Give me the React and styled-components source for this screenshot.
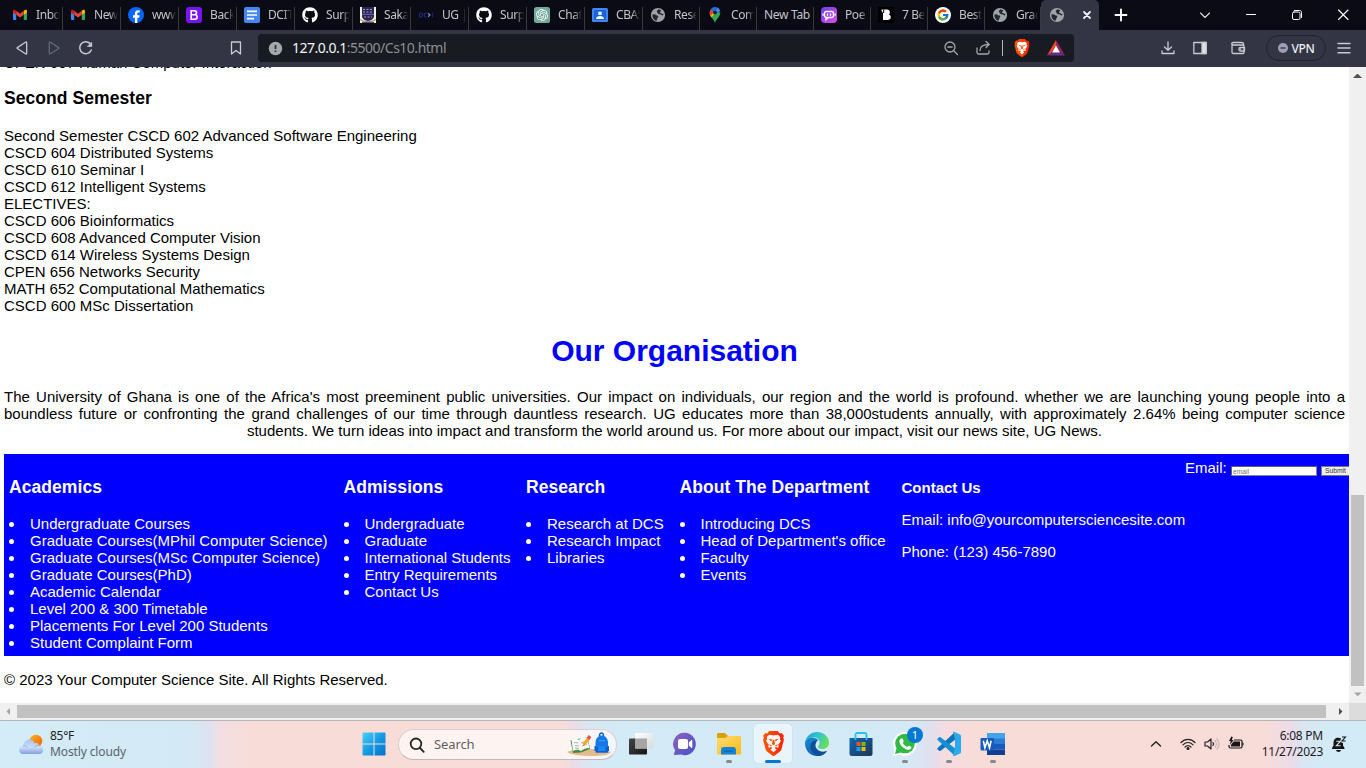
import React from "react";
import styled, { createGlobalStyle, css } from "styled-components";
import { FaGithub } from "react-icons/fa";
import { FcGoogle } from "react-icons/fc";
import { SiOpenai } from "react-icons/si";

const GlobalStyle = createGlobalStyle`
  *, *::before, *::after { box-sizing: border-box; }
  body { margin: 0; overflow: hidden; background: #fff; }
  svg { display: block; flex: none; }
`;

const uiFont = `"Noto Sans", "Open Sans", sans-serif`;

const Screen = styled.div`
  width: 1366px;
  height: 768px;
  display: flex;
  flex-direction: column;
  overflow: hidden;
  font-family: ${uiFont};
`;

/* ---------- tab strip ---------- */
const TabStrip = styled.div`
  height: 30px;
  flex: none;
  display: flex;
  padding-left: 5px;
  background: #0b0b15;
  color: #c3c4cb;
`;

const Tab = styled.div`
  width: ${(p) => p.$width || 58}px;
  height: 30px;
  flex: none;
  display: flex;
  align-items: center;
  padding-left: 7px;
  background: linear-gradient(#38393f, #38393f) right 7px / 1px 100% no-repeat;
`;

const Favicon = styled.div`
  width: 16px;
  height: 16px;
  margin-right: 8px;
  flex: none;
`;

const TabTitle = styled.div`
  flex: 1;
  min-width: 0;
  margin-right: ${(p) => (p.$bare ? 2 : 3)}px;
  overflow: hidden;
  white-space: nowrap;
  font-size: 12px;
  line-height: 18px;
  letter-spacing: ${(p) => (p.$bare ? -0.3 : -0.42)}px;
  ${(p) =>
    !p.$bare &&
    css`
      mask-image: linear-gradient(to right, #000 65%, transparent 100%);
    `}
`;

const ActiveTab = styled.div`
  width: 58px;
  flex: none;
  display: flex;
  align-items: center;
  padding-left: 8px;
  gap: 17px;
  border-radius: 5px 5px 0 0;
  background: #333544;
`;

const Slot = styled.div`
  width: ${(p) => p.$width}px;
  flex: none;
  display: flex;
  align-items: center;
  justify-content: center;
`;

const Spacer = styled.div`
  flex: 1;
`;

/* ---------- toolbar ---------- */
const Toolbar = styled.div`
  height: 37px;
  flex: none;
  display: flex;
  align-items: stretch;
  padding: 0 6px 1px;
  background: #333544;
`;

const AddressBar = styled.div`
  width: 816px;
  height: 28px;
  margin: 4px 78px 0 6px;
  flex: none;
  display: flex;
  align-items: center;
  padding-left: 10px;
  border-radius: 4px;
  background: #181b22;
`;

const Url = styled.div`
  margin-left: 9px;
  font-size: 14px;
  line-height: 20px;
  letter-spacing: -0.5px;
  white-space: nowrap;
  color: #8d9096;
  b { font-weight: 400; color: #f4f4f6; }
`;

const Divider = styled.div`
  width: 1px;
  height: 16px;
  margin: 0 3px;
  background: #b4b5ba;
`;

const VpnPill = styled.div`
  width: 60px;
  height: 26px;
  margin: 5px 0 0 6px;
  flex: none;
  display: flex;
  align-items: center;
  justify-content: center;
  gap: 4px;
  border: 1px solid #20222e;
  border-radius: 13px;
  color: #eeeef2;
  font-size: 12px;
  font-weight: 500;
  letter-spacing: -0.4px;
`;

/* ---------- web page ---------- */
const Viewport = styled.div`
  height: 636px;
  flex: none;
  display: flex;
`;

const Page = styled.main`
  width: 1349px;
  height: 636px;
  padding: 0 4px;
  overflow: hidden;
  background: #fff;
  color: #000;
  font: 15px/17px "Liberation Sans", Arial, sans-serif;
`;

const ClippedLine = styled.div`
  margin-top: -13px;
`;

const SectionTitle = styled.h3`
  margin: 16.55px 0 19.5px;
  font-size: 17.55px;
  line-height: 20px;
  font-weight: 700;
  letter-spacing: 0.05px;
`;

const ColumnTitle = styled(SectionTitle)`
  margin: 17.55px 0 18.55px;
`;

const PageTitle = styled.h1`
  margin: 20px 0;
  font-size: 30px;
  line-height: 34px;
  font-weight: 700;
  text-align: center;
  color: #0000ff;
`;

const Intro = styled.p`
  margin: 0 0 15px;
  text-align: justify;
  text-align-last: center;
`;

const JustifiedLine = styled.span`
  display: block;
  text-align: justify;
  text-align-last: justify;
  white-space: nowrap;
`;

const Footer = styled.footer`
  width: 1440px;
  display: flex;
  padding: 5px;
  background: #0000ff;
  color: #fff;
`;

const Column = styled.section`
  width: ${(p) => p.$width}px;
  flex: none;
  white-space: nowrap;
`;

const LinkList = styled.ul`
  margin: 0;
  padding: 0;
  list-style: disc inside;
`;

const ContactTitle = styled.h4`
  margin: 20px 0 15px;
  font-size: 15px;
  line-height: 17px;
`;

const ContactLine = styled.p`
  margin: 0 0 15px;
`;

const MailForm = styled.div`
  height: 17px;
  display: flex;
  align-items: flex-end;
`;

const MailLabel = styled.label`
  width: 46px;
`;

const MailInput = styled.input`
  width: 86px;
  height: 10px;
  margin: 0 4px 0 0;
  padding: 0 1px;
  border: 1px solid #767676;
  border-color: #5f5f5f #858585 #858585 #5f5f5f;
  background: #fff;
  font: 6.7px/8px "Liberation Sans", Arial, sans-serif;
  &::placeholder { color: #757575; }
`;

const SubmitButton = styled.button`
  width: 34px;
  height: 10px;
  padding: 0 3px;
  border: 1px solid #767676;
  background: #efefef;
  color: #333;
  font: 6.7px/8px "Liberation Sans", Arial, sans-serif;
  text-align: left;
`;

const Copyright = styled.p`
  margin: 15px 0 0;
`;

/* ---------- scrollbars ---------- */
const VerticalBar = styled.div`
  width: 17px;
  display: flex;
  flex-direction: column;
  align-items: center;
  padding: 5px 0 4px;
  background: #f0f0f0;
`;

const VerticalThumb = styled.div`
  width: 13px;
  height: 191px;
  margin: auto 0 4px;
  background: #c1c1c1;
`;

const HorizontalBar = styled.div`
  height: 17px;
  flex: none;
  display: flex;
  align-items: center;
  background: #f0f0f0;
`;

const HorizontalThumb = styled.div`
  width: 1309px;
  height: 13px;
  background: #c1c1c1;
`;

const Corner = styled.div`
  width: 17px;
  height: 17px;
  background: #dcdcdc;
`;

/* ---------- taskbar ---------- */
const Taskbar = styled.div`
  height: 48px;
  flex: none;
  display: flex;
  border-top: 1px solid #b2b6b9;
  background: linear-gradient(
    to right,
    #d4ecf8 0, #d3eaf6 185px, #dce3f1 208px, #f3dee3 220px, #f8dcd8 250px,
    #f8dcd8 560px, #ebdce9 575px, #d9e6f3 588px, #d3ebf7 610px,
    #d4eaf6 905px, #e2dfee 932px, #f5dce0 945px, #f8dcd8 975px,
    #f8dcd8 1265px, #ecdce8 1291px, #d9e6f4 1303px, #d3ebf7 1325px
  );
`;

const Weather = styled.div`
  width: 352px;
  flex: none;
  display: flex;
  padding: 12px 0 0 18px;
`;

const WeatherText = styled.div`
  margin: -5px 0 0 6px;
  font-size: 12px;
  line-height: 16px;
  letter-spacing: -0.28px;
  color: #1d2226;
  span { display: block; color: #59636a; letter-spacing: -0.12px; }
`;

const SearchBox = styled.div`
  width: 219px;
  height: 31px;
  margin: 8px 2px 0 2px;
  flex: none;
  display: flex;
  align-items: center;
  padding: 0 5px 0 10px;
  border: 1px solid #dccfcf;
  border-bottom-color: #c2b7ba;
  border-radius: 16px;
  background: linear-gradient(to right, #fdf4f2 75%, #f2f7fb);
  color: #616161;
  font-size: 13px;
  letter-spacing: -0.1px;
  span { margin: -2px 0 0 9px; }
`;

const TaskItem = styled.div`
  width: 44px;
  height: 47px;
  flex: none;
  position: relative;
  display: flex;
  flex-direction: column;
  align-items: center;
  padding-top: 3px;
`;

const TaskIcon = styled.div`
  width: 38px;
  height: 39px;
  display: flex;
  align-items: center;
  justify-content: center;
  border-radius: 4px;
  ${(p) =>
    p.$active &&
    css`
      background: #eaf4fb;
      box-shadow: 0 0 1px #aebdc7;
    `}
`;

const Indicator = styled.div`
  width: ${(p) => (p.$active ? 16 : 6)}px;
  height: 3px;
  margin-top: -3px;
  z-index: 1;
  border-radius: 2px;
  background: ${(p) => (p.$active ? "#0a74d1" : "#85898d")};
`;

const Badge = styled.div`
  position: absolute;
  top: 6px;
  left: 24px;
  width: 16px;
  height: 16px;
  border-radius: 8px;
  background: #0078d4;
  color: #fff;
  font-size: 11px;
  line-height: 16px;
  text-align: center;
`;

const Tray = styled.div`
  height: 46px;
  display: flex;
  align-items: center;
`;

const Clock = styled.div`
  width: 75px;
  margin-right: 8px;
  text-align: right;
  font-size: 12px;
  line-height: 16px;
  letter-spacing: -0.25px;
  color: #1b1b1b;
`;

/* ---------- drawings ---------- */
const Stroke = ({ w = 16, h = w, color = "#c9cad0", sw = 1.3, children }) => (
  <svg width={w} height={h} viewBox={`0 0 ${w} ${h}`} fill="none" stroke={color} strokeWidth={sw} strokeLinecap="round" strokeLinejoin="round">
    {children}
  </svg>
);

const Gmail = () => (
  <svg width="16" height="16" viewBox="0 0 16 16">
    <path fill="#4285f4" d="M1 4v8.2c0 .5.4.8.9.8h2.3V6.5z" />
    <path fill="#34a853" d="M11.8 13h2.3c.5 0 .9-.3.9-.8V4l-3.2 2.5z" />
    <path fill="#fbbc04" d="M11.8 3.8v4L15 5.4V4c0-1.4-1.400-1.600-2.100-1z" />
    <path fill="#ea4335" d="M4.200 7.800V3.800L8 6.700l3.800-2.900v4L8 10.600z" />
    <path fill="#c5221f" d="M1 4v1.400l3.200 2.400v-4L3.100 3C2.200 2.400 1 2.900 1 4z" />
  </svg>
);

const Facebook = () => (
  <svg width="16" height="16" viewBox="0 0 16 16">
    <circle cx="8" cy="8" r="8" fill="#0866ff" />
    <path fill="#fff" d="M6.900 16v-5.300H5V8.200h1.900V6.700c0-2.300 1-3.500 3.300-3.500.6 0 1.200.1 1.500.2v2.100h-.9c-1.100 0-1.500.5-1.500 1.500v1.200h2.300l-.4 2.500H9.300V16z" />
  </svg>
);

const Bootstrap = () => (
  <svg width="16" height="16" viewBox="0 0 16 16">
    <rect width="16" height="16" rx="3" fill="#7a12f6" />
    <path fill="none" stroke="#fff" strokeWidth="1.600" d="M5.200 3.800h3.300c2.700 0 2.700 3.900 0 3.900H5.200zM5.200 7.700h3.700c3 0 3 4.500 0 4.500H5.200z" />
  </svg>
);

const Docs = () => (
  <svg width="16" height="16" viewBox="0 0 16 16">
    <rect width="16" height="16" rx="2" fill="#4486f4" />
    <path stroke="#fff" strokeWidth="1.700" d="M3 4.300h10M3 8h10M3 11.700h7" />
  </svg>
);

const Crest = () => (
  <svg width="16" height="16" viewBox="0 0 16 16">
    <path fill="#f3f1e8" d="M0 0h16v16H0z" />
    <path fill="#262361" d="M2 0h12v9c0 3-3 4.500-6 5-3-.5-6-2-6-5z" />
    <path stroke="#b9a66a" strokeWidth="1" strokeDasharray="2 1.500" d="M3 2.500h10M3 5h10M4 10h8" />
    <path stroke="#6f6db0" d="M2 7.300h12" />
    <path fill="none" stroke="#c0a85c" strokeWidth="1.300" d="M0 12.500c4 3 12 3 16 0" />
    <path stroke="#262361" d="M2 15.300h12" />
  </svg>
);

const Dcs = () => (
  <svg width="16" height="16" viewBox="0 0 16 16" fill="none" strokeWidth="1.200">
    <path stroke="#23247c" d="M1.500 6v4H3c2 0 2-4 0-4zM8.500 6.300c-3-1-3 4.400 0 3.400" />
    <path stroke="#8084c8" d="M10 6.200l2 1.800-2 1.800" />
    <path stroke="#1c1e70" d="M14.500 5.500v5" />
  </svg>
);

const ChatGpt = () => (
  <svg width="16" height="16" viewBox="0 0 16 16">
    <rect width="16" height="16" rx="2.500" fill="#74aa9c" />
    <SiOpenai x="2" y="2" width="12" height="12" size={12} color="#fff" />
  </svg>
);

const Classroom = () => (
  <svg width="16" height="16" viewBox="0 0 16 16">
    <rect y="1" width="16" height="14" rx="1.500" fill="#4285f4" />
    <path fill="#1a63d8" d="M2 3h12v10H2z" />
    <circle cx="8" cy="6.300" r="1.900" fill="#fff" />
    <path fill="#fff" d="M4 12c0-4 8-4 8 0z" />
  </svg>
);

const Globe = () => (
  <svg width="16" height="16" viewBox="0 0 16 16">
    <circle cx="8" cy="8" r="7.100" fill="#9fa2a9" />
    <path fill="#25272f" d="M2.500 7.300l3 .2c.3 1.500 2.800.4 2.800 2 0 .8-1 1-1 2s-.8 1.400-.9 2.600C3.300 12.800 2 10.200 2.500 7.300zM8.300 2.200c-.3 1-1.300.9-1.500 1.900-.1.900.8 1.200.8 1.900 0 1 1.700 1.200 2.700 1.300 1 .2 1.600 1.300 2.700 1.100l.5-1.600c-.8.500-1.500.2-2-.5-.4-.6-1.500-.2-1.500-1.100s1.300-.6 1.200-1.900z" />
  </svg>
);

const MapPin = () => (
  <svg width="16" height="16" viewBox="0 0 16 16">
    <path fill="#34a853" d="M8 16C7.200 12.500 3 10 2.700 5.800L8 5.500l5.300-.3C13.300 10 8.800 12 8 16z" />
    <path fill="#fbbc04" d="M2.700 6c0 1.700.7 3 1.700 4.400L9.800 4 7.300 3z" />
    <path fill="#ea4335" d="M4 2l3.200 2.800-3.500 4C2.200 6.400 2.500 3.600 4 2z" />
    <path fill="#1a73e8" d="M4 2c1.600-2 4.400-2.500 6.500-1.400L6.300 5z" />
    <path fill="#4285f4" d="M10.500.6c1.400.7 2.300 1.900 2.700 3.500L9.500 7 7.600 4z" />
    <circle cx="8" cy="5.500" r="2" fill="#1c2333" />
  </svg>
);

const Poe = () => (
  <svg width="16" height="16" viewBox="0 0 16 16">
    <defs>
      <linearGradient id="poe" x1="0" y1="0" x2="1" y2="1"><stop stopColor="#673fe5" /><stop offset="1" stopColor="#e34cf0" /></linearGradient>
    </defs>
    <rect width="16" height="16" rx="4" fill="url(#poe)" />
    <rect x="3.500" y="4.500" width="9" height="6" rx="2" fill="none" stroke="#fff" strokeWidth="1.300" />
    <path stroke="#fff" strokeWidth="1.300" d="M6.500 6.500V8.700M9.500 6.500V8.700M5 11v1.800l1.800-1.800M2 6.500V8.700M14 6.500V8.700" />
  </svg>
);

const BlackB = () => (
  <svg width="16" height="16" viewBox="0 0 16 16">
    <path fill="#000" d="M0 0h16v16H0z" />
    <path fill="#fff" d="M3.500 2.500h5.500c2 0 2.800 1 2.800 2.700s-.5 2-1 2.300c1.500.7 2 1.500 2 2.800 0 2-1.500 2.700-3.300 2.700H5V6L3.500 4z" />
    <path fill="#222" d="M5 2.500h1.200v3.500H5z" />
  </svg>
);

const GoogleRound = () => (
  <svg width="16" height="16" viewBox="0 0 16 16">
    <circle cx="8" cy="8" r="8" fill="#fff" />
    <FcGoogle x="1.500" y="1.500" size={13} />
  </svg>
);

const Lion = ({ w, h }) => (
  <svg width={w} height={h} viewBox="0 0 20 24">
    <defs>
      <linearGradient id="lion"><stop stopColor="#ff5601" /><stop offset=".5" stopColor="#ff4000" /><stop offset="1" stopColor="#ff1f01" /></linearGradient>
    </defs>
    <path fill="url(#lion)" d="M6 0h8l2 2.300 1.700-.4L20 4.500l-.7 1.900.7 2-2.200 8.400c-.4 1.700-.8 2.300-2.200 3.400l-4.400 3.300c-.7.600-1.700.6-2.400 0l-4.400-3.300c-1.400-1.100-1.800-1.700-2.200-3.400L0 8.400l.7-2L0 4.500l2.300-2.600L4 2.300z" />
    <path fill="#fff" d="M10 4.300l3.700-.7c.9.100 1.600.8 2.800 2.500l-.5 1.700 1 1.200c-.2 1.500-2 3.400-2.600 4.100l.7 1.500-.8 1.700-1.700-1.100-1.600 1 1.700 1.200c.3.300.1.700-.2.900L10 20.500l-2.500-2.200c-.3-.2-.5-.6-.2-.9L9 16.200l-1.600-1-1.700 1.100-.8-1.700.7-1.500C5 12.400 3.200 10.500 3 9l1-1.200-.5-1.700C4.700 4.400 5.400 3.700 6.300 3.600z" />
    <path fill="#ff4800" d="M5 7.500l3.500.7-.2 1.700-1-.2zM15 7.500l-3.500.7.2 1.700 1-.2zM9.200 8.500h1.600l.6 4.300-1.400.9-1.400-.9zM6 12.500l2.800 1.900-1 .3-1.500-.9zM14 12.500l-2.800 1.900 1 .3 1.500-.9z" />
  </svg>
);

const Bat = () => (
  <svg width="18" height="16" viewBox="0 0 18 16">
    <path fill="#ff4724" d="M9 0v5L4.500 12.500 0 15.500z" />
    <path fill="#9e1f63" d="M9 0l9 15.500-4.500-3L9 5z" />
    <path fill="#662d91" d="M0 15.500l4.500-3h9l4.500 3z" />
    <path fill="#fff" d="M9 5.300l4 7.200H5z" />
  </svg>
);

const Triangle = ({ d, color }) => (
  <svg width="9" height="9" viewBox="0 0 9 9"><path d={d} fill={color} /></svg>
);

const WeatherIcon = () => (
  <svg width="26" height="22" viewBox="0 0 26 22">
    <defs>
      <linearGradient id="sun" x1="0" y1="0" x2="1" y2="1"><stop stopColor="#f8b31a" /><stop offset="1" stopColor="#f0620a" /></linearGradient>
      <linearGradient id="cloud" x1="0" y1="0" x2="0" y2="1"><stop stopColor="#a9c3f0" /><stop offset=".55" stopColor="#cbdcf8" /><stop offset="1" stopColor="#7f9fe2" /></linearGradient>
    </defs>
    <circle cx="18" cy="8" r="6.300" fill="url(#sun)" />
    <path fill="url(#cloud)" d="M5 21c-5 0-5.200-8 .2-8.200C6 5.500 15 4 16.500 10.500 18 9.500 20.500 10 21 12.500c5.500-.3 5.500 8.500.5 8.500z" />
    <path fill="none" stroke="#86a5e2" strokeWidth=".8" d="M5.200 12.800c2-.3 3.500.5 4.300 1.800M21 12.500c-2.500-.5-4 .5-4.500 2" />
  </svg>
);

const Start = () => (
  <svg width="24" height="24" viewBox="0 0 24 24">
    <defs>
      <linearGradient id="win" gradientUnits="userSpaceOnUse" x1="0" y1="0" x2="24" y2="24"><stop stopColor="#4fd3fc" /><stop offset=".5" stopColor="#159be4" /><stop offset="1" stopColor="#006fcc" /></linearGradient>
    </defs>
    <path fill="url(#win)" d="M.5 1.500A1 1 0 0 1 1.500.5H11.500v11H.5zM12.500.5h10a1 1 0 0 1 1 1v10h-11zM.5 12.500h11v11h-10a1 1 0 0 1-1-1zM12.500 12.500h11v10a1 1 0 0 1-1 1h-10z" />
  </svg>
);

const SearchArt = () => (
  <svg width="44" height="25" viewBox="0 0 44 25">
    <path fill="#e6bb8b" d="M0 20c8-4 35-4 44 0-2 3-9 4-19 4S4 23 0 20z" />
    <path fill="#438c44" d="M3.500 8.500l8-1.500 9-2 2.500 12-9 3.500-8 .5z" />
    <path fill="#fbfaf2" d="M4.500 8c3-2 5-1.500 7.500 0l2 11c-3-2-5-1.500-8 0zM12 8c2-2.500 5-3 8-2.500l2.500 10.500c-4 0-6 1-8.500 3z" />
    <path stroke="#a3aec5" d="M7 10.500l4 .5M8 13.500l4 .5M8 16l4 .5M14 11l5-2M15 14l5-2" />
    <path stroke="#f5a623" strokeWidth="3" d="M16.500 13l5-6.500" />
    <path stroke="#e84d4f" strokeWidth="3.200" d="M21 7l2-3" />
    <path fill="none" stroke="#1364c8" strokeWidth="1.500" d="M32.500 4c0-4 4-4 4 0" />
    <path fill="#1677e8" d="M28.500 11c0-10 12.500-10 12.500 0v9.500H28.500z" />
    <path fill="#0b62ce" d="M29 15h11.500v5.500H29zM27.500 14h1.500v5h-1.500zM40.500 14h1.500v5h-1.500z" />
    <path fill="#3b9cf5" d="M31.500 8h6.500v1.300h-6.500z" />
    <path fill="#1f86f0" d="M31 14.500h7.500v4.500H31z" />
  </svg>
);

const TaskView = () => (
  <svg width="24" height="24" viewBox="0 0 24 24">
    <defs>
      <linearGradient id="tv" x1="0" y1="0" x2="1" y2="1"><stop stopColor="#444" /><stop offset="1" stopColor="#161616" /></linearGradient>
      <linearGradient id="tw" x1="0" y1="0" x2="1" y2="1"><stop stopColor="#fff" /><stop offset="1" stopColor="#d9d9d9" /></linearGradient>
    </defs>
    <rect y="6.500" width="18" height="16" rx="1" fill="url(#tv)" />
    <rect x="6" y="1" width="18" height="15.500" rx="1" fill="url(#tw)" />
    <path fill="#a5a5a5" d="M6 6.500h12v10H6z" />
  </svg>
);

const Teams = () => (
  <svg width="24" height="24" viewBox="0 0 24 24">
    <defs>
      <linearGradient id="teams" x1="0" y1="0" x2="1" y2="1"><stop stopColor="#8d62b9" /><stop offset="1" stopColor="#4852c8" /></linearGradient>
    </defs>
    <path fill="url(#teams)" d="M12 .8A11.200 11.200 0 1 1 8 22.600L1.500 23c-.8 0-.7-.7-.4-1.200l1-3.500A11.200 11.200 0 0 1 12 .8z" />
    <rect x="5" y="7" width="10" height="10" rx="2" fill="#fff" />
    <path fill="#fff" d="M15.800 10.500l2.500-2.200c.5-.4 1-.2 1 .4v6.600c0 .6-.5.8-1 .4l-2.500-2.200z" />
  </svg>
);

const Explorer = () => (
  <svg width="26" height="24" viewBox="0 0 26 24">
    <defs>
      <linearGradient id="fold" x1="0" y1="0" x2="1" y2="1"><stop stopColor="#ffdc70" /><stop offset="1" stopColor="#fbb91c" /></linearGradient>
    </defs>
    <path fill="#dca00c" d="M1 2.500C1 1.500 1.500 1 2.500 1H9l3 3-3 4H1z" />
    <path fill="url(#fold)" d="M1 6h8l3.500-2H24c.7 0 1 .5 1 1v16c0 1-.5 1.500-1.500 1.500h-21C1.500 22.500 1 22 1 21z" />
    <path fill="#1683d5" d="M5 22.500V18c0-2 1-3 3-3h9c2 0 3 1 3 3v4.500z" />
    <path fill="#0a63b1" d="M8.500 18.500h8c1 0 1 1.300 0 1.300h-8c-1 0-1-1.300 0-1.300z" />
  </svg>
);

const Edge = () => (
  <svg width="26" height="26" viewBox="0 0 26 26">
    <defs>
      <linearGradient id="e1" x1="0" y1="0" x2="1" y2=".4"><stop stopColor="#279fd7" /><stop offset=".55" stopColor="#31c5cd" /><stop offset="1" stopColor="#65de62" /></linearGradient>
      <linearGradient id="e2" x1="0" y1="0" x2="0" y2="1"><stop stopColor="#1789cf" /><stop offset="1" stopColor="#0f68bd" /></linearGradient>
    </defs>
    <path fill="url(#e2)" d="M1 12C2 5 10 5 14 9c-4 0-5 4-4 7 1.500 4.500 8 6.500 13 4-3 4-7 5.500-11 5C5.500 24.500 1 19 1 12z" />
    <path fill="#0d5099" d="M14 9c-6-1-9 5-7 9.500 1.200 3.500 4 6 7 6.500 4 0 7-2 9-5-4 1.500-8 .5-10-2-3-3-1-7 1-9z" />
    <path fill="url(#e1)" d="M1 12C2 5 7 1 13 1c7.500 0 12 5.500 12 10.500 0 4-3 6.500-6.500 6.500-3 0-4.500-1-4.500-2s1.500-1.500 1.500-4C15.500 5 5 4 1 12z" />
  </svg>
);

const Store = () => (
  <svg width="26" height="26" viewBox="0 0 26 26">
    <defs>
      <linearGradient id="store" x1="0" y1="0" x2="1" y2="1"><stop stopColor="#0d69b3" /><stop offset="1" stopColor="#203453" /></linearGradient>
    </defs>
    <path fill="url(#store)" d="M1.500 7h23v15.500c0 1.700-.8 2.500-2.500 2.500H4c-1.700 0-2.500-.8-2.500-2.500z" />
    <path fill="none" stroke="#27c2ed" strokeWidth="1.800" d="M7.500 9V4c0-1.300.5-2 2-2h7c1.500 0 2 .7 2 2v5" />
    <path fill="#f25022" d="M8.500 11H12.500v4H8.500z" /><path fill="#7fba00" d="M13.500 11h4v4h-4z" />
    <path fill="#00a4ef" d="M8.500 16H12.500v4H8.500z" /><path fill="#ffb900" d="M13.500 16h4v4h-4z" />
  </svg>
);

const WhatsApp = () => (
  <svg width="26" height="26" viewBox="0 0 26 26">
    <path fill="#fff" d="M12.500 1A12 12 0 1 1 7 23.600L1 25.300l1.700-6A12 12 0 0 1 12.500 1z" />
    <circle cx="13" cy="12.500" r="9.800" fill="#32b944" />
    <path fill="#32b944" d="M3 23l1.500-6 4.500 4.500z" />
    <path fill="#fff" d="M9.300 7.500c1.700-.4 1.700.8 2.300 2.500.3.900-1 1.500-.8 2.100 1 1.800 2.300 3 4.200 3.800.7.200 1.200-1.400 1.900-1.200l2.500 1.300c.3 1.800-1.800 3-3.300 2.800C12 18.200 8.300 14.500 7.500 11.200 7.200 9.500 8 8 9.300 7.500z" />
  </svg>
);

const VsCode = () => (
  <svg width="26" height="26" viewBox="0 0 26 26">
    <path fill="#0877b9" d="M18.500 1.500L1.600 17c-.5.500-.5 1 0 1.500l1.500 1.300c.5.400 1 .4 1.500 0L19 8.800z" />
    <path fill="#1491d5" d="M18.500 24.500L1.600 9c-.5-.5-.5-1 0-1.500l1.500-1.300c.5-.4 1-.4 1.500 0L19 17.200z" />
    <path fill="#29a9ee" d="M18.500 1l5.500 2.500c.7.400 1 .9 1 1.600v15.800c0 .7-.3 1.200-1 1.600L18.500 25c-.8.300-1.300.1-1.700-.3L19 23V3l-2.200-1.700c.4-.4.900-.6 1.700-.3z" />
  </svg>
);

const Word = () => (
  <svg width="26" height="26" viewBox="0 0 26 26">
    <path fill="#41a5ee" d="M7 2h18v6H7z" /><path fill="#2b7cd3" d="M7 7.500h18V13H7z" />
    <path fill="#185abd" d="M7 13h18v5.500H7z" /><path fill="#103f91" d="M7 18.500h18V24H7z" />
    <rect x=".5" y="7" width="13.500" height="12.500" rx="1" fill="#185abd" />
    <path fill="none" stroke="#fff" strokeWidth="1.600" d="M3.300 9.700l1.600 7 2.300-7 2.300 7 1.600-7" />
  </svg>
);

/* ---------- data ---------- */
const tabs = [
  { icon: <Gmail />, title: "Inbox" },
  { icon: <Gmail />, title: "New m" },
  { icon: <Facebook />, title: "www.f" },
  { icon: <Bootstrap />, title: "Backg" },
  { icon: <Docs />, title: "DCIT" },
  { icon: <FaGithub size={16} color="#fff" />, title: "Surpr" },
  { icon: <Crest />, title: "Sakai" },
  { icon: <Dcs />, title: "UG | D" },
  { icon: <FaGithub size={16} color="#fff" />, title: "Surpr" },
  { icon: <ChatGpt />, title: "ChatG" },
  { icon: <Classroom />, title: "CBAS" },
  { icon: <Globe />, title: "Resea", width: 57 },
  { icon: <MapPin />, title: "Comp", width: 57 },
  { title: "New Tab", width: 57 },
  { icon: <Poe />, title: "Poe -", width: 57 },
  { icon: <BlackB />, title: "7 Best", width: 57 },
  { icon: <GoogleRound />, title: "Best w", width: 57 },
  { icon: <Globe />, title: "Gradu", width: 56 },
];

const courses = [
  "Second Semester CSCD 602 Advanced Software Engineering",
  "CSCD 604 Distributed Systems",
  "CSCD 610 Seminar I",
  "CSCD 612 Intelligent Systems",
  "ELECTIVES:",
  "CSCD 606 Bioinformatics",
  "CSCD 608 Advanced Computer Vision",
  "CSCD 614 Wireless Systems Design",
  "CPEN 656 Networks Security",
  "MATH 652 Computational Mathematics",
  "CSCD 600 MSc Dissertation",
];

const columns = [
  {
    title: "Academics",
    width: 334.5,
    links: [
      "Undergraduate Courses",
      "Graduate Courses(MPhil Computer Science)",
      "Graduate Courses(MSc Computer Science)",
      "Graduate Courses(PhD)",
      "Academic Calendar",
      "Level 200 & 300 Timetable",
      "Placements For Level 200 Students",
      "Student Complaint Form",
    ],
  },
  { title: "Admissions", width: 182.5, links: ["Undergraduate", "Graduate", "International Students", "Entry Requirements", "Contact Us"] },
  { title: "Research", width: 153.5, links: ["Research at DCS", "Research Impact", "Libraries"] },
  { title: "About The Department", width: 222, links: ["Introducing DCS", "Head of Department's office", "Faculty", "Events"] },
];

const apps = [
  { icon: <TaskView /> },
  { icon: <Teams /> },
  { icon: <Explorer />, open: true },
  { icon: <Lion w={21} h={25} />, open: true, active: true },
  { icon: <Edge /> },
  { icon: <Store /> },
  { icon: <WhatsApp />, open: true, badge: "1" },
  { icon: <VsCode />, open: true },
  { icon: <Word />, open: true },
];

export default function App() {
  return (
    <Screen>
      <GlobalStyle />
      <TabStrip>
        {tabs.map((t, i) => (
          <Tab key={i} $width={t.width}>
            {t.icon && <Favicon>{t.icon}</Favicon>}
            <TabTitle $bare={!t.icon}>{t.title}</TabTitle>
          </Tab>
        ))}
        <ActiveTab>
          <Globe />
          <Stroke w={10} color="#f0f0f2" sw={1.8}><path d="M2 2l6 6M8 2L2 8" /></Stroke>
        </ActiveTab>
        <Slot $width={44}><Stroke w={14} color="#fff" sw={1.9}><path d="M7 1.500v11M1.500 7h11" /></Stroke></Slot>
        <Spacer />
        <Slot $width={46}><Stroke w={12} h={8} color="#dedee2" sw={1.1}><path d="M1.500 2L6 6.500 10.500 2" /></Stroke></Slot>
        <Slot $width={46}><Stroke w={12} color="#fff" sw={1}><path d="M1.500 5.500h9" /></Stroke></Slot>
        <Slot $width={46}>
          <Stroke w={12} color="#fff" sw={1}><rect x="1.500" y="3" width="7.500" height="7.500" rx="1.500" /><path d="M3.500 1.500h5c1.500 0 2 .8 2 2v5" /></Stroke>
        </Slot>
        <Slot $width={46}><Stroke w={12} color="#fff" sw={1.1}><path d="M1.500 1l9.500 9.500M11 1L1.500 10.500" /></Stroke></Slot>
      </TabStrip>

      <Toolbar>
        <Slot $width={32}><Stroke><path d="M11.500 2.200L3.300 7.600c-.4.300-.4.600 0 .9l8.200 5.300c.7.400 1.200.1 1.200-.6V2.800c0-.7-.5-1-1.200-.6z" /></Stroke></Slot>
        <Slot $width={32}><Stroke color="#64677a"><path d="M4.500 2.200l8.200 5.400c.4.300.4.600 0 .9l-8.200 5.300c-.7.400-1.200.1-1.200-.6V2.800c0-.7.500-1 1.200-.6z" /></Stroke></Slot>
        <Slot $width={32}>
          <Stroke sw={1.500}><path d="M13.300 10A6 6 0 1 1 12 3.400l1.300 1.800" /><path d="M13.700 2.500v4h-4z" fill="#c9cad0" strokeWidth=".7" /></Stroke>
        </Slot>
        <Slot $width={118} />
        <Slot $width={32}><Stroke><path d="M3.500 2h9v12L8 10.500 3.500 14z" /></Stroke></Slot>
        <AddressBar>
          <svg width="15" height="15" viewBox="0 0 15 15"><circle cx="7.500" cy="7.500" r="6.700" fill="#a3a7b0" /><path stroke="#30333b" strokeWidth="1.800" d="M7.500 4v4M7.500 9.400v1.600" /></svg>
          <Url><b>127.0.0.1</b>:5500/Cs10.html</Url>
          <Spacer />
          <Slot $width={32}><Stroke color="#a3a6ad"><circle cx="7" cy="7" r="5" /><path d="M4.800 7h4.400M11 11l3.500 3.500" /></Stroke></Slot>
          <Slot $width={32}><Stroke color="#a3a6ad"><path d="M2 8v4.500c0 1 .5 1.500 1.500 1.500h9c1 0 1.500-.5 1.500-1.500V11M5 10.500C5 6.500 8 4.500 14 4.500M11 1.500l3.200 3-3.200 3" /></Stroke></Slot>
          <Divider />
          <Slot $width={32}><Lion w={16} h={18} /></Slot>
          <Slot $width={36}><Bat /></Slot>
        </AddressBar>
        <Slot $width={32}><Stroke><path d="M8 2v8M4.500 7L8 10.300 11.500 7M2 11v2.500h12V11" /></Stroke></Slot>
        <Slot $width={32}><Stroke><path d="M1.800 2.500h12.400v11H1.800z" /><path d="M10 2.500h4.200v11H10z" fill="#e1e2e6" /></Stroke></Slot>
        <Slot $width={44}><Stroke><path d="M13.500 5V4c0-1-.5-1.500-1.500-1.500H3.200c-2 0-2 2.500 0 2.500H13c.8 0 1 .5 1 1v6.500c0 .6-.4 1-1 1H3.500C2.200 13.500 2 13 2 12V4M14.500 7.500h-4c-2.200 0-2.200 3.500 0 3.500h4zM10.500 9.200h.2" /></Stroke></Slot>
        <VpnPill>
          <svg width="10" height="10" viewBox="0 0 10 10"><circle cx="5" cy="5" r="5" fill="#9c9fba" /><path stroke="#333544" strokeWidth="1.400" d="M2.500 5h5" /></svg>
          VPN
        </VpnPill>
        <Slot $width={36}><Stroke sw={1.400}><path d="M2 3.500h12M2 8h12M2 12.800h12" /></Stroke></Slot>
      </Toolbar>

      <Viewport>
        <Page>
          <ClippedLine>CPEN 607 Human Computer Interaction</ClippedLine>
          <SectionTitle>Second Semester</SectionTitle>
          {courses.map((c) => <div key={c}>{c}</div>)}
          <PageTitle>Our Organisation</PageTitle>
          <Intro>
            <JustifiedLine>The University of Ghana is one of the Africa's most preeminent public universities. Our impact on individuals, our region and the world is profound. whether we are launching young people into a</JustifiedLine>
            <JustifiedLine>boundless future or confronting the grand challenges of our time through dauntless research. UG educates more than 38,000students annually, with approximately 2.64% being computer science</JustifiedLine>
            students. We turn ideas into impact and transform the world around us. For more about our impact, visit our news site, UG News.
          </Intro>
          <Footer>
            {columns.map((c) => (
              <Column key={c.title} $width={c.width}>
                <ColumnTitle>{c.title}</ColumnTitle>
                <LinkList>{c.links.map((l) => <li key={l}>{l}</li>)}</LinkList>
              </Column>
            ))}
            <Column $width={283.5}>
              <ContactTitle>Contact Us</ContactTitle>
              <ContactLine>Email: info@yourcomputersciencesite.com</ContactLine>
              <ContactLine>Phone: (123) 456-7890</ContactLine>
            </Column>
            <MailForm>
              <MailLabel>Email:</MailLabel>
              <MailInput placeholder="email" />
              <SubmitButton>Submit</SubmitButton>
            </MailForm>
          </Footer>
          <Copyright>© 2023 Your Computer Science Site. All Rights Reserved.</Copyright>
        </Page>
        <VerticalBar>
          <Triangle d="M0 6l4-4h1l4 4z" color="#505050" />
          <VerticalThumb />
          <Triangle d="M1 2.500h7.500L5 6h-.500z" color="#a3a3a3" />
        </VerticalBar>
      </Viewport>
      <HorizontalBar>
        <Slot $width={17}><Triangle d="M6 1v7L2.500 4.500z" color="#a3a3a3" /></Slot>
        <HorizontalThumb />
        <Spacer />
        <Slot $width={17}><Triangle d="M3 1v7l3.500-3.500z" color="#505050" /></Slot>
        <Corner />
      </HorizontalBar>

      <Taskbar>
        <Weather>
          <WeatherIcon />
          <WeatherText>85°F<span>Mostly cloudy</span></WeatherText>
        </Weather>
        <TaskItem><TaskIcon><Start /></TaskIcon></TaskItem>
        <SearchBox>
          <Stroke w={16} color="#252525" sw={1.800}><circle cx="7" cy="6.800" r="5.300" /><path d="M11 11l3.700 3.800" /></Stroke>
          <span>Search</span>
          <Spacer />
          <SearchArt />
        </SearchBox>
        {apps.map((a, i) => (
          <TaskItem key={i}>
            <TaskIcon $active={a.active}>{a.icon}</TaskIcon>
            {a.open && <Indicator $active={a.active} />}
            {a.badge && <Badge>{a.badge}</Badge>}
          </TaskItem>
        ))}
        <Spacer />
        <Tray>
          <Slot $width={40}><Stroke w={12} h={8} color="#222" sw={1.400}><path d="M1.500 6L6 1.800 10.500 6" /></Stroke></Slot>
          <Slot $width={24}>
            <Stroke w={16} color="#222" sw={1.200}><path d="M1 6.500c4-4.300 10-4.300 14 0M3 8.800c3-3 7-3 10 0M5 11c2-1.900 4-1.900 6 0" /><circle cx="8" cy="12.500" r="1" fill="#222" /></Stroke>
          </Slot>
          <Slot $width={24}>
            <Stroke w={16} color="#222" sw={1.200}><path d="M1 6h2.500L7 3v10l-3.500-3H1zM9 6.500c.7 1 .7 2 0 3" /><path d="M11 4.500c2 2.500 2 4.500 0 7M13 3c3 3.500 3 6.500 0 10" stroke="#c7b5b2" /></Stroke>
          </Slot>
          <Slot $width={24}>
            <svg width="16" height="16" viewBox="0 0 16 16"><path fill="#151515" d="M3.300.5L1 5h1.700L2 9l3.500-5H3.800l1-3z" /><path fill="none" stroke="#151515" strokeWidth="1.200" d="M6 4h6.500c1 0 1.500.5 1.500 1.500v5c0 1-.5 1.500-1.500 1.500h-10C1.500 12 1 11.500 1 10.500V9" /><path fill="#151515" d="M5.500 5.500H12v5H3V9zM14.500 6.300c1.500 0 1.500 3.500 0 3.500z" /></svg>
          </Slot>
          <Clock>6:08 PM<br />11/27/2023</Clock>
          <svg width="16" height="18" viewBox="0 0 16 18">
            <path fill="#151515" d="M10 3.200C5.500 1.500 2.500 4 2.500 7.500v3L1 13v1h12.500v-1L12 10.500V8L9 7z" />
            <path fill="#151515" d="M5 15h5c-.5 2.500-4.500 2.500-5 0z" />
            <path fill="none" stroke="#d6eaf6" strokeWidth="1.100" d="M5.300 6.300h4L5.300 10.800h4.400" />
            <path fill="none" stroke="#151515" strokeWidth="1.100" d="M11 2h3.500L11 6h3.700" />
          </svg>
          <Slot $width={19} />
        </Tray>
      </Taskbar>
    </Screen>
  );
}
